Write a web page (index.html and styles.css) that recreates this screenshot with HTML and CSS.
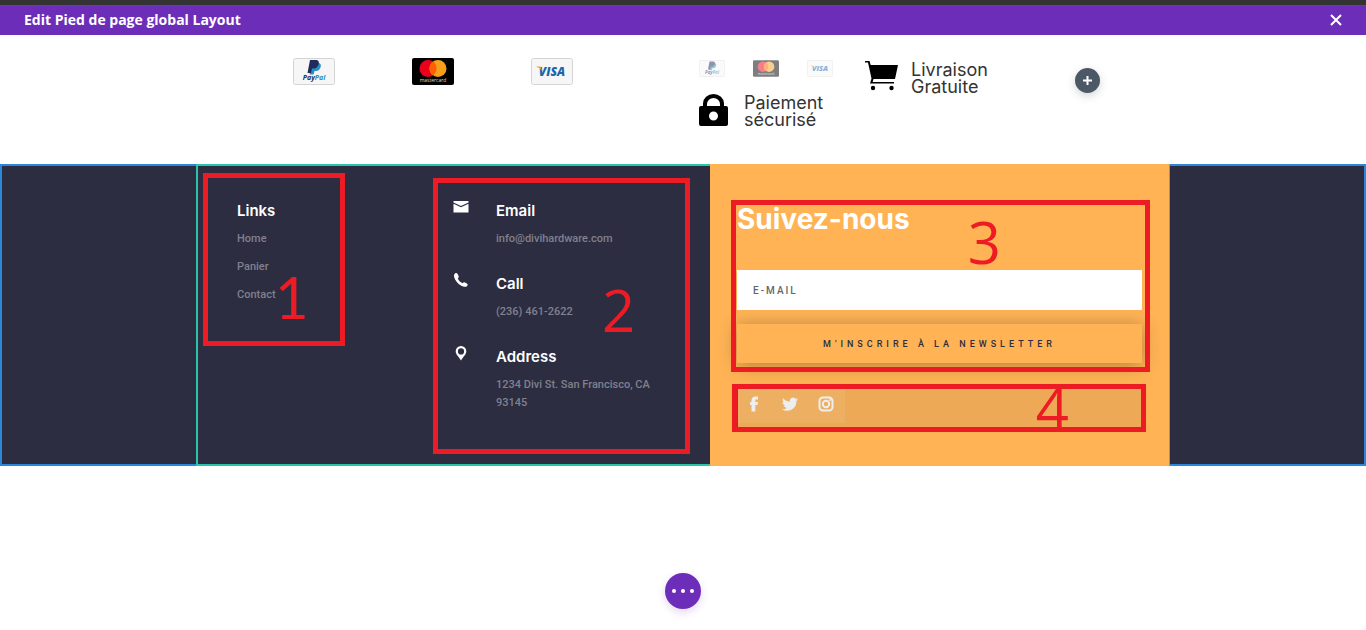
FILE: index.html
```html
<!DOCTYPE html>
<html lang="fr">

<head>
    <meta charset="UTF-8" />
    <meta name="viewport" content="width=device-width, initial-scale=1.0" />
    <title>Edit Pied de page global Layout</title>

    <link rel="stylesheet" href="styles.css">
</head>

<body>
    <header class="editor-bar">
        <h1 class="editor-title">Edit Pied de page global Layout</h1>
        <button type="button" class="close-btn" aria-label="Fermer">
            <svg viewBox="0 0 12 12"><path d="M1 1l10 10M11 1L1 11" stroke="#fff" stroke-width="2" /></svg>
        </button>
    </header>

    <main>
        <section class="payments">
            <div class="methods">
                <svg class="card" viewBox="0 0 42 27">
                    <rect x="0.5" y="0.5" width="41" height="26" rx="2" fill="#f6f6f6" stroke="#d4d4d4" />
                    <path d="M19.500 5h5.500c2.500 0 3.500 2 2.500 4.500s-2.500 3.500-4.500 3.500h-1.500l-1 3.500h-4z" fill="#2790c3" />
                    <path d="M17 2h5.500c3 0 4 2 3 4.500s-2.500 4-4.500 4h-2l-1 4.500h-3.500z" fill="#1f2c5c" />
                    <text x="21" y="22" text-anchor="middle" class="logo-paypal"><tspan fill="#1f2c5c">Pay</tspan><tspan fill="#2790c3">Pal</tspan></text>
                </svg>
                <svg class="card" viewBox="0 0 42 27">
                    <rect width="42" height="27" rx="2" fill="#000" />
                    <circle cx="16" cy="10.500" r="8.500" fill="#eb001b" />
                    <circle cx="26" cy="10.500" r="8.500" fill="#f79e1b" />
                    <path d="M21 3.600a8.500 8.500 0 0 1 0 13.800a8.500 8.500 0 0 1 0-13.800z" fill="#ff5f00" />
                    <text x="21" y="23.500" text-anchor="middle" class="logo-mastercard">mastercard</text>
                </svg>
                <svg class="card" viewBox="0 0 42 27">
                    <rect x="0.5" y="0.5" width="41" height="26" rx="2" fill="#f6f6f6" stroke="#d4d4d4" />
                    <text x="21" y="17.500" text-anchor="middle" class="logo-visa">VISA</text>
                    <path d="M5.500 8.500h4l2 5c-1-2-3-3.500-6-4.500z" fill="#f0a62f" />
                </svg>
            </div>
            <div class="secure">
                <div class="mini-methods">
                    <svg class="mini-card" viewBox="0 0 42 27">
                        <rect x="0.5" y="0.5" width="41" height="26" rx="2" fill="#f6f6f6" stroke="#d4d4d4" />
                        <path d="M19.500 5h5.500c2.500 0 3.500 2 2.500 4.500s-2.500 3.500-4.500 3.500h-1.500l-1 3.500h-4z" fill="#2790c3" />
                        <path d="M17 2h5.500c3 0 4 2 3 4.500s-2.500 4-4.500 4h-2l-1 4.500h-3.500z" fill="#1f2c5c" />
                        <text x="21" y="22" text-anchor="middle" class="logo-paypal"><tspan fill="#1f2c5c">Pay</tspan><tspan fill="#2790c3">Pal</tspan></text>
                    </svg>
                    <svg class="mini-card" viewBox="0 0 42 27">
                        <rect width="42" height="27" rx="2" fill="#000" />
                        <circle cx="16" cy="10.500" r="8.500" fill="#eb001b" />
                        <circle cx="26" cy="10.500" r="8.500" fill="#f79e1b" />
                        <path d="M21 3.600a8.500 8.500 0 0 1 0 13.800a8.500 8.500 0 0 1 0-13.800z" fill="#ff5f00" />
                        <text x="21" y="23.500" text-anchor="middle" class="logo-mastercard">mastercard</text>
                    </svg>
                    <svg class="mini-card" viewBox="0 0 42 27">
                        <rect x="0.5" y="0.5" width="41" height="26" rx="2" fill="#f6f6f6" stroke="#d4d4d4" />
                        <text x="21" y="17.500" text-anchor="middle" class="logo-visa">VISA</text>
                        <path d="M5.500 8.500h4l2 5c-1-2-3-3.500-6-4.500z" fill="#f0a62f" />
                    </svg>
                </div>
                <div class="blurb">
                    <svg class="lock" viewBox="0 0 29 32">
                        <path d="M4 13V9.500a10.500 9.500 0 0 1 21 0V13h-4V10a6.500 6 0 0 0-13 0v3z" />
                        <path fill-rule="evenodd" d="M2 12h25a2 2 0 0 1 2 2v16a2 2 0 0 1-2 2H2a2 2 0 0 1-2-2V14a2 2 0 0 1 2-2zM14.500 17.500a4.500 4.500 0 1 0 0 9a4.500 4.500 0 1 0 0-9z" />
                    </svg>
                    <p class="blurb-text">Paiement<br>sécurisé</p>
                </div>
            </div>
            <div class="blurb shipping">
                <svg class="cart" viewBox="0 0 33 30">
                    <path d="M0 0h4.500l1.200 4H33l-3 14H8.500l-.8 3H29v1.500H5l1.500-5L3 1.500H0z" />
                    <circle cx="8" cy="27" r="2.200" />
                    <circle cx="26.500" cy="27" r="2.200" />
                </svg>
                <p class="blurb-text">Livraison<br>Gratuite</p>
            </div>
            <button type="button" class="add-btn" aria-label="Ajouter">
                <svg viewBox="0 0 9 9"><path d="M4.500 0v9M0 4.500h9" stroke="#fff" stroke-width="2" /></svg>
            </button>
        </section>

        <footer class="footer">
            <div class="side side-left"></div>

            <div class="info">
                <nav class="links">
                    <h2 class="info-title">Links</h2>
                    <a href="#home">Home</a>
                    <a href="#panier">Panier</a>
                    <a href="#contact">Contact</a>
                </nav>

                <div class="contacts">
                    <div class="contact">
                        <svg class="contact-icon" viewBox="0 0 16 16">
                            <path d="M.5 2h15v1.500L8 7 .5 3.500z" />
                            <path d="M.5 4.700L8 8.200l7.500-3.500V13.500H.5z" />
                        </svg>
                        <div>
                            <h2 class="info-title">Email</h2>
                            <p>info@divihardware.com</p>
                        </div>
                    </div>
                    <div class="contact">
                        <svg class="contact-icon" viewBox="0 0 16 16">
                            <path d="M2 1.500C3 .8 4 1 4.600 2l1 2c.4 1 0 1.700-.8 2.200.6 2.300 2.400 4 4.800 5 .6-.9 1.400-1.300 2.300-.8l2 1.200c.9.6 1 1.500.2 2.300-1.300 1.400-3.500 1.100-5.800-.2C4.500 11.400 2 8.400 1.200 5.200.8 3.500 1 2.300 2 1.500z" />
                        </svg>
                        <div>
                            <h2 class="info-title">Call</h2>
                            <p>(236) 461-2622</p>
                        </div>
                    </div>
                    <div class="contact">
                        <svg class="contact-icon" viewBox="0 0 16 16">
                            <path fill-rule="evenodd" d="M8 1a5.200 5.200 0 0 1 5.300 5.300C13.300 9.500 10 12 8 15.500 6 12 2.700 9.500 2.700 6.300A5.200 5.200 0 0 1 8 1zM8 3.300a3.100 3.100 0 1 0 0 6.200a3.100 3.100 0 1 0 0-6.200z" />
                        </svg>
                        <div>
                            <h2 class="info-title">Address</h2>
                            <p>1234 Divi St. San Francisco, CA 93145</p>
                        </div>
                    </div>
                </div>

                <div class="mark mark-1"><span>1</span></div>
                <div class="mark mark-2"><span>2</span></div>
            </div>

            <div class="newsletter">
                <h2 class="newsletter-title">Suivez-nous</h2>
                <form class="newsletter-form">
                    <input type="email" class="email" placeholder="E-MAIL" aria-label="E-mail" />
                    <button type="submit" class="subscribe">M'INSCRIRE À LA NEWSLETTER</button>
                </form>
                <div class="social">
                    <div class="social-links">
                        <a href="#facebook" aria-label="Facebook">
                            <svg viewBox="0 0 16 16"><path d="M5.500 15.500V9H4V6h1.500V4.400C5.500 2 7 .6 9.500.6H12v3h-1.500c-.9 0-1.200.4-1.200 1.200V6H12l-.4 3H9.300v6.500z" /></svg>
                        </a>
                        <a href="#twitter" aria-label="Twitter">
                            <svg viewBox="0 0 16 16"><path d="M16 3.200c-.6.300-1.200.4-1.900.5.7-.4 1.200-1 1.400-1.800-.6.400-1.300.6-2.100.8A3.300 3.300 0 0 0 7.800 5.700C5.100 5.600 2.700 4.300 1.100 2.300.2 3.800.7 5.700 2.100 6.700c-.5 0-1-.2-1.500-.4 0 1.600 1.100 2.900 2.600 3.200-.5.100-1 .2-1.500.1.400 1.300 1.600 2.200 3.100 2.300A6.600 6.600 0 0 1 0 13.200 9.300 9.300 0 0 0 14.400 4.900c.6-.5 1.200-1 1.600-1.700z" /></svg>
                        </a>
                        <a href="#instagram" aria-label="Instagram">
                            <svg viewBox="0 0 16 16">
                                <rect x="1.500" y="1.500" width="13" height="13" rx="3.500" fill="none" stroke="#eee" stroke-width="2" />
                                <circle cx="8" cy="8" r="3.200" fill="none" stroke="#eee" stroke-width="2" />
                                <circle cx="12" cy="4" r="1" />
                            </svg>
                        </a>
                    </div>
                </div>

                <div class="mark mark-3"><span>3</span></div>
                <div class="mark mark-4"><span>4</span></div>
            </div>

            <div class="side side-right"></div>
        </footer>

        <div class="page-tools">
            <button type="button" class="more-btn" aria-label="Plus d'options"><i></i><i></i><i></i></button>
        </div>
    </main>
</body>

</html>
```
FILE: styles.css
```css
* {
    box-sizing: border-box;
}

body {
    margin: 0;
    background: #fff;
    font-family: Inter, "Open Sans", sans-serif;
}

h1,
h2,
p {
    margin: 0;
}

button {
    border: 0;
    padding: 0;
    cursor: pointer;
}

a {
    text-decoration: none;
}

.logo-paypal {
    font: italic bold 7px "Open Sans", sans-serif;
}

.logo-mastercard {
    font: 5px "Open Sans", sans-serif;
    fill: #ddd;
}

.logo-visa {
    font: italic 800 12px "Open Sans", sans-serif;
    fill: #1a66ab;
}

/* Editor bar */
.editor-bar {
    display: flex;
    align-items: center;
    justify-content: space-between;
    height: 35px;
    padding: 0 24px;
    border-top: 5px solid #333;
    background: #6c2eb9;
    box-shadow: inset 0 1px #5d4b70;
}

.editor-title {
    color: #fff;
    font: 700 14px/20px "Open Sans", sans-serif;
}

.close-btn {
    display: flex;
    background: none;
}

.close-btn svg {
    width: 12px;
    height: 12px;
}

/* Payment logos */
.payments {
    display: grid;
    grid-template-columns: 445fr 166fr 210fr 37fr;
    min-height: 129px;
    padding: 23px 254px 0;
}

.methods {
    display: grid;
    grid-template-columns: repeat(3, 1fr);
    justify-items: center;
    align-items: start;
    padding-right: 88px;
}

.card {
    width: 42px;
    height: 27px;
}

.mini-methods {
    display: flex;
    gap: 28px;
    padding-top: 2px;
    opacity: 0.5;
}

.mini-card {
    width: 26px;
    height: 17px;
}

.blurb {
    display: flex;
    align-items: flex-start;
}

.secure .blurb {
    gap: 16px;
    padding-top: 17px;
}

.shipping {
    gap: 13px;
    padding-top: 3px;
}

.lock {
    width: 29px;
    height: 32px;
}

.cart {
    width: 33px;
    height: 30px;
}

.blurb-text {
    color: #333;
    font-size: 18px;
    line-height: 17px;
}

.add-btn {
    display: flex;
    align-items: center;
    justify-content: center;
    width: 25px;
    height: 25px;
    margin-top: 10px;
    border-radius: 50%;
    background: #4c5866;
    box-shadow: 0 3px 8px rgba(76, 88, 102, 0.25);
}

.add-btn svg {
    width: 9px;
    height: 9px;
}

/* Footer */
.footer {
    display: grid;
    grid-template-columns: 196fr 514fr 460fr 196fr;
    min-height: 302px;
    background: #2c2d41;
}

.side {
    border: 2px solid #2b87da;
}

.side-left {
    border-right: 0;
}

.side-right {
    border-left: 0;
}

.info {
    position: relative;
    display: grid;
    grid-template-columns: 216px 1fr;
    padding: 36px 50px 0 39px;
    border: 2px solid #29c4a9;
    border-right: 0;
}

.info-title {
    color: #fff;
    font-size: 15px;
    font-weight: 600;
    line-height: 18px;
}

.links a,
.contact p {
    margin-top: 10px;
    color: #80818d;
    font: 500 11px/18px Roboto, sans-serif;
}

.links a {
    display: block;
}

.contacts {
    display: flex;
    flex-direction: column;
    gap: 27px;
}

.contact {
    display: flex;
    align-items: flex-start;
    gap: 27px;
}

.contact-icon {
    flex: none;
    width: 16px;
    height: 16px;
    margin-top: -3px;
    fill: #fff;
}

/* Newsletter column */
.newsletter {
    position: relative;
    padding: 38px 27px 34px;
    border-right: 1px solid #29c4a9;
    background: #ffb355;
}

.newsletter-title {
    color: #fff;
    font-size: 28px;
    font-weight: 700;
    line-height: 34px;
}

.newsletter-form {
    display: grid;
    gap: 14px;
    margin-top: 34px;
}

.email {
    width: 100%;
    height: 40px;
    padding: 0 16px;
    border: 0;
    border-radius: 0;
    background: #fff;
    font: 500 10px Roboto, sans-serif;
    letter-spacing: 2px;
}

.email::placeholder {
    color: #666;
}

.subscribe {
    height: 39px;
    background: #ffb355;
    box-shadow: 0 2px 18px rgba(0, 0, 0, 0.3);
    color: #2c2d41;
    font: 500 9px Roboto, sans-serif;
    letter-spacing: 4px;
}

.social {
    height: 42px;
    margin-top: 23px;
    border: 1px solid #4c5866;
    background: #eda956;
}

.social-links {
    display: flex;
    gap: 20px;
    width: 107px;
    height: 36px;
    padding: 9px 8px;
    background: #edb062;
}

.social-links a {
    width: 16px;
    height: 16px;
}

.social-links svg {
    display: block;
    width: 16px;
    height: 16px;
    fill: #eee;
}

/* Numbered frames laid over the modules */
.mark {
    position: absolute;
    border: 5px solid #ed1c24;
    color: #ed1c24;
    font: 58px/58px "Open Sans", sans-serif;
    pointer-events: none;
}

.mark span {
    position: absolute;
}

.mark-1 {
    top: 7px;
    left: 5px;
    width: 142px;
    height: 173px;
    font-family: Lato, sans-serif;
}

.mark-1 span {
    top: 90px;
    left: 67px;
}

.mark-2 {
    top: 12px;
    right: 20px;
    width: 257px;
    height: 276px;
}

.mark-2 span {
    top: 98px;
    left: 164px;
}

.mark-3 {
    top: 36px;
    left: 21px;
    right: 19px;
    height: 172px;
}

.mark-3 span {
    top: 8px;
    right: 144px;
}

.mark-4 {
    top: 220px;
    left: 22px;
    right: 23px;
    height: 48px;
}

.mark-4 span {
    top: -10px;
    right: 72px;
}

/* Page tools */
.page-tools {
    display: flex;
    justify-content: center;
    padding: 107px 0 20px;
}

.more-btn {
    display: flex;
    align-items: center;
    justify-content: center;
    gap: 5px;
    width: 36px;
    height: 36px;
    border-radius: 50%;
    background: #6c2eb9;
    box-shadow: 0 3px 8px rgba(108, 46, 185, 0.2);
}

.more-btn i {
    width: 4px;
    height: 4px;
    border-radius: 50%;
    background: #fff;
}
```
